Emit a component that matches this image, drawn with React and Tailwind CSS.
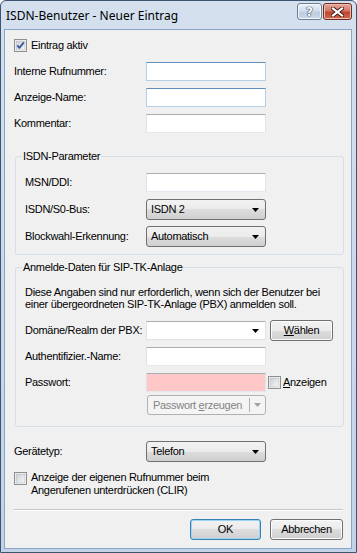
import React from "react";

const Check = ({ checked }) => (
  <svg width="13" height="13" viewBox="0 0 13 13" className="shrink-0">
    <defs>
      <linearGradient id={checked ? "cbg1" : "cbg0"} x1="0" y1="0" x2="1" y2="1">
        <stop offset="0" stopColor="#cbcfd5" />
        <stop offset="1" stopColor="#f7f7f7" />
      </linearGradient>
    </defs>
    <rect x="0.5" y="0.5" width="12" height="12" fill="#fff" stroke="#8e8f8f" />
    <rect x="2" y="2" width="9" height="9" fill={`url(#${checked ? "cbg1" : "cbg0"})`} stroke="#adb2b9" strokeWidth="0.6" />
    {checked && (
      <path d="M3.3 6.4 L5.4 8.8 L9.8 3.4" fill="none" stroke="#3b5aa5" strokeWidth="1.9" strokeLinejoin="round" />
    )}
  </svg>
);

const Arrow = ({ color = "#000" }) => (
  <svg width="7" height="4" viewBox="0 0 7 4" className="shrink-0">
    <polygon points="0,0 7,0 3.5,4" fill={color} />
  </svg>
);

const TextBox = ({ blue, pink }) => (
  <div
    className={`h-[19px] w-[120px] border ${
      pink ? "bg-[#ffc8c8]" : "bg-white"
    } ${
      blue
        ? "border-[#b5cfe7] border-t-[#5d90c0]"
        : "border-[#e2e3ea] border-t-[#abadb3] border-b-[#e3e9ef]"
    }`}
  />
);

const Combo = ({ value }) => (
  <div className="flex h-[21px] w-[120px] items-center justify-between rounded-[3px] border border-[#707070] bg-[linear-gradient(#f2f2f2_0%,#ebebeb_50%,#dddddd_50%,#cfcfcf_100%)] pl-[4px] pr-[6px]">
    <span>{value}</span>
    <Arrow />
  </div>
);

const Btn = ({ children, className = "", def }) => (
  <div
    className={`flex h-[21px] items-center justify-center rounded-[3px] border ${
      def
        ? "border-[#3c7fb1] shadow-[inset_0_0_0_1px_#9ad4f6]"
        : "border-[#707070] shadow-[inset_0_0_0_1px_#fcfcfc]"
    } bg-[linear-gradient(#f2f2f2_0%,#ebebeb_50%,#dddddd_50%,#cfcfcf_100%)] ${className}`}
  >
    {children}
  </div>
);

const Row = ({ label, labelW = "w-[132px]", children, className = "" }) => (
  <div className={`flex items-center ${className}`}>
    <span className={`${labelW} shrink-0 whitespace-nowrap`}>{label}</span>
    {children}
  </div>
);

const Group = ({ title, className = "", children }) => (
  <div className={`relative ml-[1px] w-[329px] rounded-[3px] border border-[#d5dfe5] pl-[9px] ${className}`}>
    <span className="absolute left-[6px] top-[-7px] bg-[#f0f0f0] px-[1px] leading-[13px]">{title}</span>
    {children}
  </div>
);

export default function App() {
  return (
    <div className="h-[553px] w-[357px] bg-white font-['Liberation_Sans',Arial,sans-serif] text-[11px] leading-[13px] tracking-[-0.3px] text-black">
      <div className="flex h-full w-full flex-col rounded-t-[6px] border border-[#3a5472] bg-[linear-gradient(#d4e0ee,#c2d3e7)]">
        {/* title bar */}
        <div className="flex h-[28px] shrink-0 items-start justify-between">
          <span className="mt-[8px] ml-[5px] font-['Noto_Sans',sans-serif] text-[12px] leading-[14px] tracking-normal">
            ISDN-Benutzer - Neuer Eintrag
          </span>
          <div className="mt-[2px] mr-[4px] flex gap-[1px]">
            <div className="flex h-[17px] w-[25px] items-center justify-center rounded-[3px] border border-[#6c7e96] bg-[linear-gradient(#eaf0f7_0%,#d3dfed_45%,#bccde2_55%,#c9d8ea_100%)] shadow-[inset_0_0_0_1px_#f4f7fb]">
              <span className="font-['DejaVu_Sans',sans-serif] text-[12px] font-bold leading-[12px] tracking-normal text-white [text-shadow:0_0_1px_#2d3b4d,0_0_1px_#2d3b4d,0_0_1px_#2d3b4d]">
                ?
              </span>
            </div>
            <div className="flex h-[17px] w-[29px] items-center justify-center rounded-[3px] border border-[#6b2c22] bg-[linear-gradient(#e8a89b_0%,#d27868_45%,#c0442e_55%,#d26a4d_100%)] shadow-[inset_0_0_0_1px_#eebcb1]">
              <svg width="13" height="10" viewBox="0 0 13 10">
                <path d="M2 1.5 L11 8.5 M11 1.5 L2 8.5" stroke="#3b1a14" strokeWidth="4" strokeLinecap="square" />
                <path d="M2 1.5 L11 8.5 M11 1.5 L2 8.5" stroke="#fff" strokeWidth="2.2" strokeLinecap="square" />
              </svg>
            </div>
          </div>
        </div>

        {/* body */}
        <div className="flex min-h-0 flex-1 pb-[3px] pl-[3px] pr-[4px]">
          <div className="flex flex-1 flex-col border border-[#8aa6c6] bg-[#f0f0f0] pl-[9px]">
            <div className="mt-[9px] flex items-center gap-[4px]">
              <Check checked />
              <span>Eintrag aktiv</span>
            </div>

            <Row label="Interne Rufnummer:" className="mt-[10px]">
              <TextBox blue />
            </Row>
            <Row label="Anzeige-Name:" className="mt-[7px]">
              <TextBox blue />
            </Row>
            <Row label="Kommentar:" className="mt-[7px]">
              <TextBox />
            </Row>

            <Group title="ISDN-Parameter" className="mt-[23px] pt-[16px] pb-[7px]">
              <Row label="MSN/DDI:" labelW="w-[121px]">
                <TextBox />
              </Row>
              <Row label="ISDN/S0-Bus:" labelW="w-[121px]" className="mt-[7px]">
                <Combo value="ISDN 2" />
              </Row>
              <Row label="Blockwahl-Erkennung:" labelW="w-[121px]" className="mt-[6px]">
                <Combo value="Automatisch" />
              </Row>
            </Group>

            <Group title="Anmelde-Daten für SIP-TK-Anlage" className="mt-[12px] pt-[18px] pb-[11px]">
              <p className="leading-[12px]">
                Diese Angaben sind nur erforderlich, wenn sich der Benutzer bei
                <br />
                einer übergeordneten SIP-TK-Anlage (PBX) anmelden soll.
              </p>
              <Row label="Domäne/Realm der PBX:" labelW="w-[121px]" className="mt-[10px]">
                <div className="flex h-[19px] w-[120px] items-center justify-end border border-[#e2e3ea] border-t-[#abadb3] bg-white pr-[6px]">
                  <Arrow />
                </div>
                <Btn className="ml-[4px] h-[19px] w-[63px]">
                  <span>
                    <span className="underline">W</span>ählen
                  </span>
                </Btn>
              </Row>
              <Row label="Authentifizier.-Name:" labelW="w-[121px]" className="mt-[6px]">
                <TextBox />
              </Row>
              <Row label="Passwort:" labelW="w-[121px]" className="mt-[7px]">
                <TextBox pink />
                <div className="ml-[2px] flex items-center gap-[2px]">
                  <Check />
                  <span>
                    <span className="underline">A</span>nzeigen
                  </span>
                </div>
              </Row>
              <div className="mt-[3px] ml-[122px] flex h-[20px] w-[119px] items-center rounded-[3px] border border-[#adb2b5] bg-[#f4f4f4] text-[#838383]">
                <span className="flex-1 pl-[5px]">
                  Passwort <span className="underline">e</span>rzeugen
                </span>
                <div className="h-[14px] w-px bg-[#b0b0b0]" />
                <div className="flex w-[15px] justify-center">
                  <Arrow color="#a0a0a0" />
                </div>
              </div>
            </Group>

            <Row label="Gerätetyp:" className="mt-[14px]">
              <Combo value="Telefon" />
            </Row>

            <div className="mt-[10px] flex items-start gap-[4px]">
              <Check />
              <span className="mt-[-1px]">
                Anzeige der eigenen Rufnummer beim
                <br />
                Angerufenen unterdrücken (CLIR)
              </span>
            </div>

            <div className="mt-[12px] w-[329px] border-t border-b border-t-[#c7c7c7] border-b-white" />

            <div className="mt-[8px] flex w-[329px] justify-end gap-[9px]">
              <Btn def className="w-[71px]">OK</Btn>
              <Btn className="w-[73px]">Abbrechen</Btn>
            </div>
          </div>
        </div>
      </div>
    </div>
  );
}
